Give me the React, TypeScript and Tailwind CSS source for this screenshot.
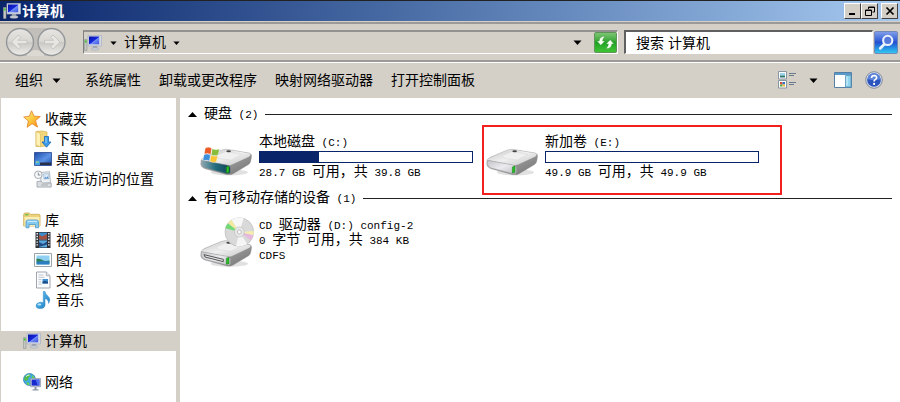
import React from 'react';

interface NavItem {
    label: string;
    icon: React.ReactNode;
}

interface Volume {
    name: string;
    letter: string;
    free: string;
    total: string;
    usedPercent: number;
    system?: boolean;
    marked?: boolean;
}

const VOLUMES: Volume[] = [
    { name: '本地磁盘', letter: '(C:)', free: '28.7 GB', total: '39.8 GB', usedPercent: 28, system: true },
    { name: '新加卷', letter: '(E:)', free: '49.9 GB', total: '49.9 GB', usedPercent: 0, marked: true }
];

const COMMANDS = ['系统属性', '卸载或更改程序', '映射网络驱动器', '打开控制面板'];

// Half-width characters
const Mono = ({ children }: { children: React.ReactNode }) => (
    <span className="whitespace-pre font-['Liberation_Mono',monospace] text-[11px]">{children}</span>
);

const Caret = ({ up = false, small = false }: { up?: boolean; small?: boolean }) => (
    <svg className={small ? 'h-1 w-[7px] shrink-0' : 'h-[5px] w-[9px] shrink-0'} viewBox="0 0 9 5" aria-hidden="true">
        <path d={up ? 'M4.5 0L9 5H0z' : 'M0.5 0.5h8L4.5 5z'} fill="#000" />
    </svg>
);

const ComputerIcon = () => (
    <svg className="h-[18px] w-[18px] shrink-0" viewBox="0 0 18 18" aria-hidden="true">
        <defs>
            <linearGradient id="screen" x1="0" y1="0" x2="1" y2="1">
                <stop offset="0" stopColor="#0712a0" />
                <stop offset="0.5" stopColor="#1726dd" />
                <stop offset="0.55" stopColor="#6f8cf5" />
                <stop offset="1" stopColor="#3b52e0" />
            </linearGradient>
        </defs>
        <path d="M0.5 5.5h2.5v11H0.5z" fill="#c3c7c4" stroke="#8f9592" strokeWidth="0.6" />
        <path d="M0.8 6.5h1.9v2H0.8z" fill="#3fc52c" />
        <path d="M4 1.5h13.5V12H4z" fill="#d3d8e4" stroke="#a9b0c0" strokeWidth="0.7" />
        <path d="M5 2.5h10.2v7.8H5z" fill="url(#screen)" />
        <path d="M9 12h4l0.5 2.4H8.5z" fill="#9ba2ae" />
        <ellipse cx="11" cy="15" rx="4.2" ry="1.3" fill="#c9ced6" stroke="#a1a7b1" strokeWidth="0.5" />
    </svg>
);

const StarIcon = () => (
    <svg className="h-[18px] w-[18px] shrink-0" viewBox="0 0 18 18" aria-hidden="true">
        <defs>
            <linearGradient id="star" x1="0" y1="0" x2="1" y2="1">
                <stop offset="0" stopColor="#fff3a0" />
                <stop offset="0.5" stopColor="#fdc83c" />
                <stop offset="1" stopColor="#f58220" />
            </linearGradient>
        </defs>
        <path d="M8.6 0.8l2.4 5.4 6.3 0.3-4.8 4.2 2 6.4-5.4-3.4-5 3.6 1.3-6.3L0.7 7l5.6-0.8z" fill="url(#star)" stroke="#e58a2f" strokeWidth="0.9" strokeLinejoin="round" />
    </svg>
);

const DownloadsIcon = () => (
    <svg className="h-[18px] w-[18px] shrink-0" viewBox="0 0 18 18" aria-hidden="true">
        <path d="M2 1.5l6-0.5 5 1v13.5l-5 1H2z" fill="#f3d67c" stroke="#d5b14d" strokeWidth="0.7" />
        <path d="M2 1.5l4.5 2V17L2 15z" fill="#fdf0b4" stroke="#d8b85c" strokeWidth="0.6" />
        <path d="M10.5 6.5h4V12H17l-4.5 5.2L8 12h2.5z" fill="#3a9be8" stroke="#1867b5" strokeWidth="0.8" />
        <path d="M11.5 7.5h1V13h-1z" fill="#9ed5fb" />
    </svg>
);

const DesktopIcon = () => (
    <svg className="h-[18px] w-[18px] shrink-0" viewBox="0 0 18 18" aria-hidden="true">
        <defs>
            <linearGradient id="desk" x1="0" y1="0" x2="1" y2="1">
                <stop offset="0" stopColor="#1c4aa8" />
                <stop offset="0.55" stopColor="#5b92e5" />
                <stop offset="1" stopColor="#1e50ac" />
            </linearGradient>
        </defs>
        <path d="M0.5 2.5h17v13H0.5z" fill="url(#desk)" stroke="#23428b" strokeWidth="0.8" />
        <path d="M6 12.5h11V15H6z" fill="#28304a" />
        <circle cx="3.4" cy="12.8" r="2.4" fill="#3da6e8" />
        <path d="M2.2 11.6h1.2v1.2H2.2z" fill="#f7d451" />
        <path d="M3.6 11.6h1.2v1.2H3.6z" fill="#8ce069" />
    </svg>
);

const RecentIcon = () => (
    <svg className="h-[18px] w-[18px] shrink-0" viewBox="0 0 18 18" aria-hidden="true">
        <path d="M6.5 2.5l9-0.8 1 11-9.5 1z" fill="#eef1f4" stroke="#a4abb3" strokeWidth="0.8" />
        <path d="M9.5 4l5-0.4 0.5 5-5 0.4z" fill="#dbe8f5" stroke="#8fb0cf" strokeWidth="0.6" />
        <path d="M10 8.8l1.5-2 1 1 1-1.6 1.4 2.2z" fill="#5f96cd" />
        <path d="M3 11.5l4-0.4 1.5 2h8.7v4H3z" fill="#d9dde1" stroke="#9ba2a9" strokeWidth="0.8" />
        <path d="M7 15h7" stroke="#a7adb3" />
        <circle cx="4.3" cy="4.8" r="3.8" fill="#f6f8fa" stroke="#9ca3aa" strokeWidth="0.9" />
        <path d="M4.3 2.6v2.5h2" fill="none" stroke="#68727c" strokeWidth="0.8" />
    </svg>
);

const LibraryIcon = () => (
    <svg className="h-[18px] w-[18px] shrink-0" viewBox="0 0 18 18" aria-hidden="true">
        <path d="M0.7 3.5q0-1.5 1.5-1.5h4l1.3 1.3h8.3q1.2 0 1.2 1.2V15H0.7z" fill="#ecd27c" stroke="#c9a94e" strokeWidth="0.8" />
        <path d="M1.5 6h15v9h-15z" fill="#fbeeb2" />
        <path d="M2 3.2h3.5v1.2H2z" fill="#62b848" />
        <path d="M3 16.8V11q0-2 2-2h8.5q2 0 2 2v5.8h-3v-3.3H6v3.3z" fill="#86c9ee" stroke="#4c98cd" strokeWidth="0.8" />
        <path d="M4.5 10.3h9.5" stroke="#d4f0ff" />
    </svg>
);

const VideoIcon = () => (
    <svg className="h-[18px] w-[18px] shrink-0" viewBox="0 0 18 18" aria-hidden="true">
        <path d="M1.5 1h15v16h-15z" fill="#2f3338" />
        <path d="M5 1.6h8v7H5z" fill="#3d8dcc" />
        <path d="M5 9.4h8v7H5z" fill="#5aa9dd" />
        <path d="M5 3.5l3 2L13 3v5.6H5z" fill="#a6503f" />
        <path d="M5 11l4 2 4-2.6v3L5 16z" fill="#264c86" />
        <path d="M3.2 2v14M14.8 2v14" stroke="#e5e9ec" strokeWidth="1.5" strokeDasharray="1.4 1.4" />
    </svg>
);

const PicturesIcon = () => (
    <svg className="h-[18px] w-[18px] shrink-0" viewBox="0 0 18 18" aria-hidden="true">
        <path d="M0.5 2.5h17v13H0.5z" fill="#fff" stroke="#9299a1" strokeWidth="0.9" />
        <path d="M2.5 4.5h13v9h-13z" fill="#8fd0f3" />
        <path d="M2.5 7.5q4 0 6 1.5t7 0.5v2h-13z" fill="#2e8054" />
        <path d="M2.5 11q7-1.8 13-0.4v2.9h-13z" fill="#2b7ec2" />
    </svg>
);

const DocumentsIcon = () => (
    <svg className="h-[18px] w-[18px] shrink-0" viewBox="0 0 18 18" aria-hidden="true">
        <path d="M2.5 1h9.8l3.7 3.7V17H2.5z" fill="#fbfcfd" stroke="#949ca5" strokeWidth="0.9" />
        <path d="M12.3 1v3.7H16" fill="#dde4ea" stroke="#949ca5" strokeWidth="0.7" />
        <path d="M4.5 4h5M4.5 6.3h6M4.5 8.6h3M4.5 10.9h3M4.5 13.2h3" stroke="#b5bec8" strokeWidth="0.9" />
        <path d="M8.5 8h5.5v4.5H8.5z" fill="#3d8fd0" />
        <path d="M8.5 11l2-1.2 3.5 1v1.7H8.5z" fill="#1c4f88" />
    </svg>
);

const MusicIcon = () => (
    <svg className="h-[18px] w-[18px] shrink-0" viewBox="0 0 18 18" aria-hidden="true">
        <defs>
            <linearGradient id="note" x1="0" y1="0" x2="1" y2="1">
                <stop offset="0" stopColor="#73cdf7" />
                <stop offset="1" stopColor="#1475bd" />
            </linearGradient>
        </defs>
        <path d="M9.3 0.5h1.7q0.4 2.8 2.8 4.5 3.6 3.2 0.8 7.4 0.3-3.7-3.6-5v7q-0.4 3-4.6 3.2-4 0-4.4-2.6 0-3 4-3.7 1.8-0.3 3.3 0.4z" fill="url(#note)" stroke="#2586c6" strokeWidth="0.5" />
        <ellipse cx="5.4" cy="13.4" rx="1.9" ry="1" fill="#b6e8fc" />
    </svg>
);

const NetworkIcon = () => (
    <svg className="h-[18px] w-[18px] shrink-0" viewBox="0 0 18 18" aria-hidden="true">
        <circle cx="6.5" cy="6.5" r="6" fill="#41a9e6" stroke="#2972ad" strokeWidth="0.7" />
        <path d="M2 3.5Q4 1 6.5 1.2L8 3 5.5 4.5 5 7 2.5 8 1 6z" fill="#52bd44" />
        <path d="M9 2l3 3v2.5L9 6.5zM3.5 9l3 1-0.5 2.3L4 11.5z" fill="#65cf50" />
        <path d="M3 3.5q2-1.7 3.5-1.5" fill="none" stroke="#e6fbff" />
        <path d="M7.5 5.5h10v8.3h-10z" fill="#ccd4e2" stroke="#8993a9" strokeWidth="0.7" />
        <path d="M8.6 6.6h7.8v6H8.6z" fill="#1828cc" />
        <path d="M12.5 6.6h3.9v6h-1.7z" fill="#4d6af0" />
        <path d="M11.5 14h2v2.2h2v1.2h-6v-1.2h2z" fill="#8e96a5" />
    </svg>
);

const DriveBody = ({ system = false, slot = false }: { system?: boolean; slot?: boolean }) => (
    <>
        <ellipse cx="88" cy="76" rx="56" ry="9" fill="#a9a9a9" opacity="0.35" />
        <path d="M3 40Q5 34 14 30L64 9Q76 5 90 8L148 18Q156 21 155 28L152 44Q151 49 145 53L100 80Q92 85 80 83L14 65Q3 61 2 52z" fill="url(#driveSide)" stroke="#a3a3a3" strokeWidth="1" />
        <path d="M6 36L64 10Q76 6 90 9L148 19Q156 23 147 29L98 52Q90 56 80 54L10 40Q4 39 6 36z" fill="url(#driveTop)" />
        <path d="M50 25L76 14 126 22 94 39 60 35Q48 32 50 25z" fill="#f0f0f0" stroke="#cfcfcf" strokeWidth="1.2" />
        <ellipse cx="86" cy="13" rx="7" ry="3" fill="#444" />
        <path d="M5 40L80 54Q91 56 91 64V76Q90 82 80 80L16 63Q6 60 4 50z" fill={system ? 'url(#driveDark)' : 'url(#driveFace)'} stroke="#949494" strokeWidth="1.2" />
        {slot && <path d="M12 49L70 63V70L15 56z" fill="#e5e5e5" stroke="#555" strokeWidth="3" />}
        <path d="M79 60L87 57V76L79 78z" fill="#29be24" stroke="#12791b" strokeWidth="1.5" />
    </>
);

const DriveDefs = () => (
    <svg className="absolute h-0 w-0" aria-hidden="true">
        <defs>
            <linearGradient id="driveTop" x1="0" y1="0" x2="1" y2="1">
                <stop offset="0" stopColor="#c8c8c8" />
                <stop offset="0.5" stopColor="#efefef" />
                <stop offset="1" stopColor="#c4c4c4" />
            </linearGradient>
            <linearGradient id="driveSide" x1="0" y1="0" x2="1" y2="1">
                <stop offset="0" stopColor="#d2d2d2" />
                <stop offset="0.6" stopColor="#929292" />
                <stop offset="1" stopColor="#707070" />
            </linearGradient>
            <linearGradient id="driveFace" x1="0" y1="0" x2="1" y2="1">
                <stop offset="0" stopColor="#c2c2c6" />
                <stop offset="0.5" stopColor="#ebebf0" />
                <stop offset="1" stopColor="#bcbcc0" />
            </linearGradient>
            <linearGradient id="driveDark" x1="0" y1="0" x2="1" y2="0">
                <stop offset="0" stopColor="#8ea9b2" />
                <stop offset="0.5" stopColor="#226a7c" />
                <stop offset="1" stopColor="#134557" />
            </linearGradient>
        </defs>
    </svg>
);

const DriveIcon = ({ system }: { system?: boolean }) => (
    <svg className="h-8 w-[52px] shrink-0" viewBox="0 0 156 96" aria-hidden="true">
        <DriveBody system={system} />
        {system && (
            <g stroke="#fff" strokeWidth="0.8">
                <path d="M16 3Q26-2 35 4L32 22Q23 17 13 21z" fill="#ec5b25" />
                <path d="M37 5Q47 11 58 6L54 24Q44 28 34 23z" fill="#86bd3a" />
                <path d="M12 23Q22 19 31 24L28 42Q19 37 9 41z" fill="#3d8fd9" />
                <path d="M33 25Q43 30 53 26L49 44Q39 49 30 43z" fill="#fac434" />
            </g>
        )}
    </svg>
);

const DiscDriveIcon = () => (
    <svg className="h-[50px] w-[54px] shrink-0" viewBox="0 0 162 150" aria-hidden="true">
        <g transform="translate(0 64)">
            <DriveBody slot />
        </g>
        <circle cx="118" cy="45" r="43" fill="#d9d9d9" stroke="#aaa" strokeWidth="1.5" />
        <path d="M118 45L94 9A43 43 0 0 1 131 4z" fill="#f7f7f7" />
        <path d="M118 45L76 34A43 43 0 0 1 84 19z" fill="#71da76" />
        <path d="M118 45L84 19A43 43 0 0 1 94 9z" fill="#f3e9a0" />
        <path d="M118 45L160 54A43 43 0 0 1 153 70z" fill="#e6b9dc" />
        <path d="M118 45L161 42A43 43 0 0 1 160 54z" fill="#f5edb0" />
        <path d="M118 45L142 81A43 43 0 0 1 108 87z" fill="#f5f5f5" />
        <circle cx="118" cy="45" r="15" fill="#e8e8e8" stroke="#bcbcbc" strokeWidth="2" />
        <circle cx="118" cy="45" r="6" fill="#fff" stroke="#a5a5a5" strokeWidth="2" />
    </svg>
);

const HistoryArrows = () => (
    <svg className="h-[30px] w-[62px]" viewBox="0 0 62 30" aria-hidden="true">
        <defs>
            <linearGradient id="orb" x1="0" y1="0" x2="0" y2="1">
                <stop offset="0" stopColor="#e6e5e2" />
                <stop offset="0.48" stopColor="#d9d7d2" />
                <stop offset="0.52" stopColor="#cbc9c4" />
                <stop offset="1" stopColor="#eeedea" />
            </linearGradient>
        </defs>
        <path d="M15 1h32v28H15z" fill="#c2bfba" />
        <path d="M22 27q8.500-8 17 0v2H22z" fill="#dcd9d3" />
        <circle cx="15" cy="15" r="13.5" fill="url(#orb)" stroke="#94979a" strokeWidth="1.4" />
        <circle cx="46.5" cy="15" r="13.5" fill="url(#orb)" stroke="#94979a" strokeWidth="1.4" />
        <path d="M6.500 15l7-7 2.300 2.300-3 3H22v3.400h-9.200l3 3L13.500 22z" fill="#e8e6e2" stroke="#bfbcb7" strokeWidth="0.7" />
        <path d="M55 15l-7-7-2.300 2.300 3 3H39.500v3.400h9.200l-3 3L48 22z" fill="#e8e6e2" stroke="#bfbcb7" strokeWidth="0.7" />
    </svg>
);

const RefreshIcon = () => (
    <svg className="h-full w-full" viewBox="0 0 22 20" aria-hidden="true">
        <g fill="#f5fff2" stroke="#2a8a2a" strokeWidth="0.4">
            <path d="M2 8.5L6 13l4.5-4.500H8Q8 6 10.500 3.500 4.500 3.500 4.300 8.500z" />
            <path d="M20 11.500L16 7l-4.500 4.500H14Q14 14 11.500 16.500 17.500 16.500 17.700 11.500z" />
        </g>
    </svg>
);

const MagnifierIcon = () => (
    <svg className="h-full w-full" viewBox="0 0 22 22" aria-hidden="true">
        <path d="M9.5 12.500L5 17" stroke="#e6f3ff" strokeWidth="3" strokeLinecap="round" />
        <circle cx="12.8" cy="8.8" r="4.8" fill="#5679dc" stroke="#e9f1fd" strokeWidth="2.2" />
    </svg>
);

const ViewIcon = () => (
    <svg className="h-[18px] w-[19px]" viewBox="0 0 19 18" aria-hidden="true">
        <path d="M0.5 0.500h8v7.500h-8zM0.500 9.500h8V17h-8z" fill="#fff" stroke="#7a8c9b" strokeWidth="0.9" />
        <path d="M2 2h5v2.500H2z" fill="#9bd4ed" />
        <path d="M2 4.500h5v2H2z" fill="#2c7770" />
        <path d="M2 11h2.500v2.500H2z" fill="#d24f3c" />
        <path d="M4.500 11H7v2.500H4.500z" fill="#3672c5" />
        <path d="M2 13.500h2.500v2H2z" fill="#54a945" />
        <path d="M4.500 13.500H7v2H4.500z" fill="#ebbc3c" />
        <path d="M11 2.500h7M11 4.500h5M11 11.500h7M11 13.500h5" stroke="#697b8d" />
    </svg>
);

const PaneIcon = () => (
    <svg className="h-4 w-[18px]" viewBox="0 0 18 16" aria-hidden="true">
        <path d="M0.5 0.500h17v15h-17z" fill="#fff" stroke="#557fa5" />
        <path d="M1 1h16v2H1z" fill="#5a9acb" />
        <path d="M11.500 3.500h5.500V15h-5.500z" fill="#92d4ee" stroke="#5692b7" strokeWidth="0.8" />
        <path d="M13 4.500v9" stroke="#d6f3fc" />
    </svg>
);

const HelpIcon = () => (
    <svg className="h-[18px] w-[18px]" viewBox="0 0 18 18" aria-hidden="true">
        <circle cx="9" cy="9" r="8.3" fill="#d5dbe5" stroke="#7b8699" strokeWidth="0.9" />
        <circle cx="9" cy="9" r="6.8" fill="#2b53bd" />
        <path d="M2.5 8a6.600 6.600 0 0 1 13 0q-6 2.500-13 0z" fill="#5b83dc" />
        <path d="M6.5 7q0.200-2.500 2.600-2.500 2.500 0.100 2.500 2.100 0 1.200-1.400 2-1.100 0.700-1.100 1.900" fill="none" stroke="#fff" strokeWidth="1.6" />
        <circle cx="9.1" cy="12.9" r="1.1" fill="#fff" />
    </svg>
);

const FAVORITES: NavItem[] = [
    { label: '下载', icon: <DownloadsIcon /> },
    { label: '桌面', icon: <DesktopIcon /> },
    { label: '最近访问的位置', icon: <RecentIcon /> }
];

const LIBRARIES: NavItem[] = [
    { label: '视频', icon: <VideoIcon /> },
    { label: '图片', icon: <PicturesIcon /> },
    { label: '文档', icon: <DocumentsIcon /> },
    { label: '音乐', icon: <MusicIcon /> }
];

interface NavGroupProps {
    label: string;
    icon: React.ReactNode;
    items?: NavItem[];
    selected?: boolean;
}

const NavGroup: React.FC<NavGroupProps> = ({ label, icon, items = [], selected = false }) => (
    <ul>
        <li>
            <a href="#" className={selected ? 'flex h-5 items-center gap-1 bg-[#d4d0c8] pl-[22px]' : 'flex h-5 items-center gap-1 pl-[22px]'}>
                {icon}
                {label}
            </a>
        </li>
        {items.map((item) => (
            <li key={item.label}>
                <a href="#" className="flex h-5 items-center gap-1 pl-[33px]">
                    {item.icon}
                    {item.label}
                </a>
            </li>
        ))}
    </ul>
);

const GroupHeader = ({ title, count }: { title: string; count: number }) => (
    <h2 className="flex h-4 items-center gap-[7px] leading-4">
        <Caret up />
        <span>
            {title}
            <Mono>{` (${count})`}</Mono>
        </span>
        <span className="h-px flex-1 bg-[#222]" />
    </h2>
);

const VolumeTile: React.FC<{ volume: Volume }> = ({ volume }) => (
    <li className="relative flex w-[286px] items-end gap-[7px] leading-4">
        <DriveIcon system={volume.system} />
        <div>
            <div className="h-4">
                {volume.name}
                <Mono>{` ${volume.letter}`}</Mono>
            </div>
            <div className="mt-0.5 h-3 w-[214px] border border-[#0a246a] bg-white">
                <div className="h-full bg-[#0a246a]" style={{ width: `${volume.usedPercent}%` }} />
            </div>
            <div className="h-4">
                <Mono>{`${volume.free} `}</Mono>
                可用，共
                <Mono>{` ${volume.total}`}</Mono>
            </div>
        </div>
        {/* Highlight frame */}
        {volume.marked && <div className="pointer-events-none absolute -top-2 -bottom-4 -left-1 w-[300px] border-2 border-[#f21f1f]" />}
    </li>
);

const captionButton = 'flex h-4 w-[17px] items-center justify-center border border-t-white border-l-white border-r-[#404040] border-b-[#404040] bg-[#d4d0c8]';

export default function App() {
    return (
        <div className="flex min-h-screen flex-col bg-[#d4d0c8] font-['Liberation_Sans','Noto_Sans_CJK_SC',sans-serif] text-[14px] text-black">
            <DriveDefs />

            {/* Title bar */}
            <header className="flex h-[21px] items-center border-t border-[#222] bg-linear-to-r from-[#0a246a] to-[#a6caf0] pr-[2px] pl-[3px]">
                <ComputerIcon />
                <h1 className="ml-px font-bold text-white">计算机</h1>
                <div className="ml-auto flex">
                    <button aria-label="最小化" className={captionButton}>
                        <svg className="h-[10px] w-[10px]" viewBox="0 0 10 10"><path d="M1 7h6v2H1z" /></svg>
                    </button>
                    <button aria-label="还原" className={captionButton}>
                        <svg className="h-[10px] w-[10px]" viewBox="0 0 10 10">
                            <path d="M3.5 3V1h6v5H7.5M3 1.5h7M0.5 4h6v5.500h-6zM0 4.500h7" fill="none" stroke="#000" />
                        </svg>
                    </button>
                    <button aria-label="关闭" className={`${captionButton} ml-[3px]`}>
                        <svg className="h-[10px] w-[10px]" viewBox="0 0 10 10"><path d="M1.5 1.5l7 7M8.5 1.5l-7 7" stroke="#000" strokeWidth="1.7" /></svg>
                    </button>
                </div>
            </header>

            {/* Address row */}
            <div className="mt-px flex h-10 items-center border-t-2 border-b-2 border-[#9b9a98] pr-[2px] pl-[5px] shadow-[0_1px_0_#fff]">
                <button aria-label="后退和前进" className="shrink-0"><HistoryArrows /></button>
                <div className="ml-4 flex h-6 flex-1 items-center border-t-2 border-r border-b border-l border-t-[#949290] border-r-white border-b-white border-l-[#808080]">
                    <ComputerIcon />
                    <div className="ml-2 flex items-center gap-[7px]">
                        <Caret small />
                        计算机
                        <Caret small />
                    </div>
                    <button aria-label="以前的位置" className="mr-3 ml-auto"><Caret /></button>
                    <button aria-label="刷新" className="h-[21px] w-[23px] rounded-xs border border-[#5e9459] bg-linear-to-b from-[#7cc573] via-[#1fa226] to-[#40c435]">
                        <RefreshIcon />
                    </button>
                </div>
                <input
                    type="search"
                    aria-label="搜索"
                    placeholder="搜索 计算机"
                    className="mr-px ml-[6px] h-6 w-[249px] border-t-2 border-r border-b border-l-2 border-t-[#606060] border-r-white border-b-white border-l-[#606060] bg-white bg-clip-padding pl-[10px] text-[14px] placeholder:text-black"
                />
                <button aria-label="开始搜索" className="h-[23px] w-6 rounded-xs border border-[#7488b8] bg-linear-to-b from-[#7f9ce8] via-[#264fd2] to-[#35c7f0]">
                    <MagnifierIcon />
                </button>
            </div>

            {/* Command bar */}
            <div className="flex h-9 items-center pr-[17px] pl-[15px]">
                <button className="mr-6 flex items-center gap-[9px]">
                    组织
                    <Caret />
                </button>
                <div className="flex gap-[18px]">
                    {COMMANDS.map((command) => (
                        <button key={command}>{command}</button>
                    ))}
                </div>
                <div className="ml-auto flex items-center">
                    <button aria-label="更改视图"><ViewIcon /></button>
                    <button aria-label="更多选项" className="ml-3"><Caret /></button>
                    <button aria-label="显示预览窗格" className="ml-4"><PaneIcon /></button>
                    <button aria-label="帮助" className="ml-[13px]"><HelpIcon /></button>
                </div>
            </div>

            <div className="flex flex-1">
                {/* Navigation pane */}
                <nav className="ml-px flex w-[175px] shrink-0 flex-col gap-[21px] bg-white pt-[11px]">
                    <NavGroup label="收藏夹" icon={<StarIcon />} items={FAVORITES} />
                    <NavGroup label="库" icon={<LibraryIcon />} items={LIBRARIES} />
                    <NavGroup label="计算机" icon={<ComputerIcon />} selected />
                    <NavGroup label="网络" icon={<NetworkIcon />} />
                </nav>

                {/* Drives */}
                <main className="ml-1 flex-1 bg-white pt-2 pr-2 pl-2">
                    <section>
                        <GroupHeader title="硬盘" count={2} />
                        <ul className="mt-[11px] flex pl-3">
                            {VOLUMES.map((volume) => (
                                <VolumeTile key={volume.letter} volume={volume} />
                            ))}
                        </ul>
                    </section>

                    <section className="mt-[11px]">
                        <GroupHeader title="有可移动存储的设备" count={1} />
                        <div className="mt-[11px] flex gap-[5px] pl-3 leading-[15px]">
                            <DiscDriveIcon />
                            <div>
                                <div className="h-[15px]"><Mono>{'CD '}</Mono>驱动器<Mono>{' (D:) config-2'}</Mono></div>
                                <div className="h-[15px]"><Mono>{'0 '}</Mono>字节<Mono> </Mono>可用，共<Mono>{' 384 KB'}</Mono></div>
                                <div className="h-[15px]"><Mono>CDFS</Mono></div>
                            </div>
                        </div>
                    </section>
                </main>
            </div>
        </div>
    );
}
